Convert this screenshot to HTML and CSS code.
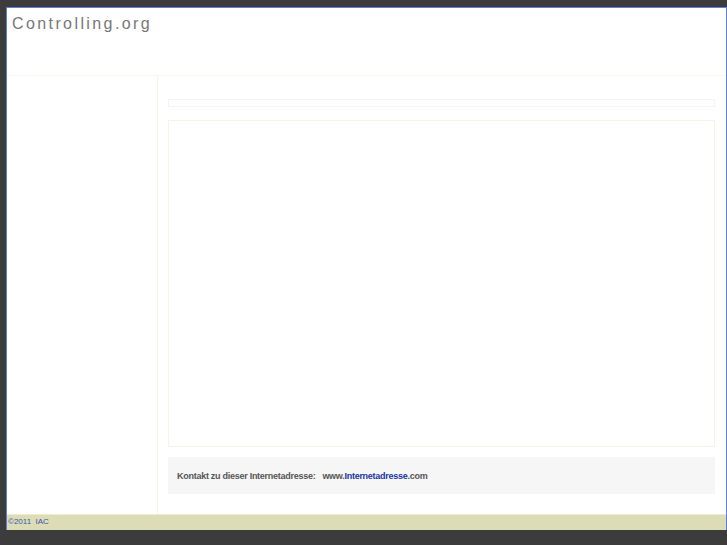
FILE: index.html
```html
<!DOCTYPE html>
<html lang="de">
<head>
<meta charset="utf-8">
<title>Controlling.org</title>
<link rel="stylesheet" href="styles.css">
</head>
<body>
<div class="page">
  <div class="header">
    <div class="title">Controlling.org</div>
  </div>
  <div class="body">
    <div class="sidebar"></div>
    <div class="main">
      <div class="bar"></div>
      <div class="frame"></div>
      <div class="contact">
        <span class="label">Kontakt zu dieser Internetadresse:</span>
        <span class="url">www.<span class="brand">Internetadresse</span>.com</span>
      </div>
    </div>
  </div>
  <div class="footer">&copy;2011&nbsp; IAC</div>
</div>
</body>
</html>
```
FILE: styles.css
```css
html, body {
  margin: 0;
  padding: 0;
}
body {
  background: #3c3c3c;
  font-family: "Liberation Sans", Arial, sans-serif;
  height: 545px;
  overflow: hidden;
}
.page {
  margin: 7px 0 0 6px;
  width: 719px;
  background: #ffffff;
  border-top: 1px solid #5b80d9;
  border-left: 1px solid #5b80d9;
  border-right: 1px solid #5b80d9;
}
.header {
  height: 67px;
  border-bottom: 1px solid #f7f7ef;
}
.title {
  padding: 7px 0 0 5px;
  font-size: 16px;
  line-height: 18px;
  letter-spacing: 2.4px;
  color: #777777;
}
.body {
  display: flex;
  height: 438px;
}
.sidebar {
  width: 150px;
  border-right: 1px solid #f5f5ea;
}
.main {
  flex: 1;
  padding: 23px 11px 0 10px;
  display: flex;
  flex-direction: column;
}
.bar {
  height: 6px;
  border: 1px solid #f4f4f1;
}
.frame {
  margin-top: 13px;
  height: 325px;
  border: 1px solid #f5f5e6;
}
.contact {
  margin-top: 10px;
  height: 37px;
  background: #f6f6f6;
  display: flex;
  align-items: center;
  padding-left: 9px;
  font-size: 9px;
  font-weight: bold;
  color: #555555;
  letter-spacing: -0.27px;
}
.url {
  margin-left: 7px;
}
.brand {
  color: #1a35a0;
}
.footer {
  height: 16px;
  background: #dcdcb6;
  border-top: 1px solid #ecebd6;
  box-sizing: border-box;
  font-size: 8px;
  line-height: 14px;
  color: #3b56a8;
  padding-left: 1px;
}
```
